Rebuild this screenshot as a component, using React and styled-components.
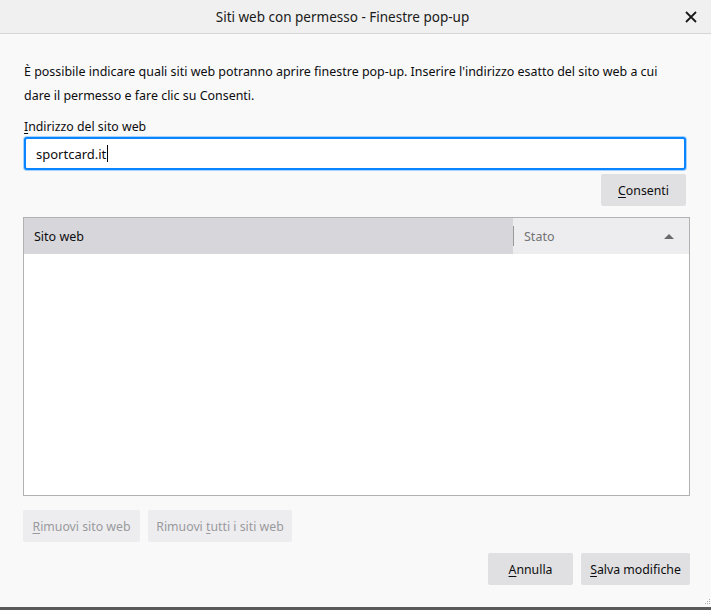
import React from "react";
import styled, { createGlobalStyle } from "styled-components";

const GlobalStyle = createGlobalStyle`
  html, body {
    margin: 0;
    padding: 0;
    background: #f9f9fa;
  }
  * {
    box-sizing: border-box;
  }
`;

const Window = styled.div`
  width: 711px;
  height: 610px;
  display: flex;
  flex-direction: column;
  background: #f9f9fa;
  font-family: "Noto Sans", "Open Sans", sans-serif;
  font-size: 12px;
  color: #0c0c0d;
  border-bottom: 3px solid #5a5a5a;
  position: relative;
`;

const TitleBar = styled.div`
  height: 34px;
  flex: none;
  display: flex;
  align-items: center;
  justify-content: center;
  background: #f0f0f0;
  border-bottom: 1px solid #d6d6d6;
  position: relative;
  padding-right: 26px;
`;

const Title = styled.div`
  font-size: 13.5px;
  color: #1a1a1a;
`;

const Close = styled.button`
  position: absolute;
  right: 12px;
  top: 9px;
  width: 16px;
  height: 16px;
  padding: 0;
  border: none;
  background: none;
  display: flex;
  align-items: center;
  justify-content: center;
`;

const Body = styled.div`
  flex: 1;
  display: flex;
  flex-direction: column;
  padding: 26px 21px 0 23px;
`;

const Intro = styled.p`
  margin: 0 0 0 1px;
  line-height: 24px;
  font-size: 12.45px;
  white-space: nowrap;
`;

const Label = styled.div`
  margin: 10px 0 0 1px;
  line-height: 18px;
  font-size: 12.3px;
`;

const Key = styled.span`
  text-decoration: underline;
  text-underline-offset: 2px;
`;

const Input = styled.div`
  margin: 1px 4px 0 1px;
  height: 33px;
  border: 2px solid #0a84ff;
  box-shadow: 0 0 0 1px #a6d2ff;
  border-radius: 3px;
  background: #fff;
  display: flex;
  align-items: center;
  padding: 0 10px;
  font-size: 13px;
`;

const Caret = styled.span`
  display: inline-block;
  width: 1px;
  height: 17px;
  background: #000;
  margin-left: 1px;
  vertical-align: middle;
`;

const Row = styled.div`
  display: flex;
  justify-content: ${(p) => p.$align || "flex-end"};
  gap: 8px;
  margin-top: ${(p) => p.$mt || 0}px;
  margin-right: ${(p) => p.$mr || 0}px;
`;

const Button = styled.button`
  height: 32px;
  padding: 0 8px;
  border: none;
  border-radius: 2px;
  background: ${(p) => (p.$disabled ? "#ededf0" : "#e0e0e2")};
  color: ${(p) => (p.$disabled ? "#9a9a9c" : "#0c0c0d")};
  font-family: inherit;
  font-size: 12.3px;
  min-width: ${(p) => p.$w || 0}px;
`;

const Table = styled.div`
  margin-top: 11px;
  height: 279px;
  border: 1px solid #b1b1b3;
  background: #fff;
  display: flex;
  flex-direction: column;
`;

const Header = styled.div`
  height: 36px;
  display: flex;
`;

const Col = styled.div`
  display: flex;
  align-items: center;
  padding: 0 10px;
  background: ${(p) => (p.$active ? "#d7d7db" : "#ededf0")};
  color: ${(p) => (p.$active ? "#0c0c0d" : "#737373")};
  flex: ${(p) => p.$flex || "none"};
  width: ${(p) => (p.$w ? p.$w + "px" : "auto")};
  justify-content: space-between;
  font-size: 12.5px;
`;

const Sep = styled.div`
  width: 1px;
  background: #ededf0;
  display: flex;
  align-items: center;
  &::after {
    content: "";
    display: block;
    width: 1px;
    height: 20px;
    background: #9a9a9c;
  }
`;

const Arrow = styled.span`
  width: 0;
  height: 0;
  border-left: 5px solid transparent;
  border-right: 5px solid transparent;
  border-bottom: 5px solid #6a6a6c;
  margin-right: 5px;
`;

const Grip = styled.svg`
  position: absolute;
  right: 0;
  bottom: 0;
`;

export default function App() {
  return (
    <>
      <GlobalStyle />
      <Window>
        <TitleBar>
          <Title>Siti web con permesso - Finestre pop-up</Title>
          <Close aria-label="Chiudi">
            <svg width="12" height="12" viewBox="0 0 12 12">
              <path d="M1 1 L11 11 M11 1 L1 11" stroke="#1a1a1a" strokeWidth="1.8" />
            </svg>
          </Close>
        </TitleBar>
        <Body>
          <Intro>
            È possibile indicare quali siti web potranno aprire finestre pop-up. Inserire l'indirizzo esatto del sito web a cui
            <br />
            dare il permesso e fare clic su Consenti.
          </Intro>
          <Label>
            <Key>I</Key>ndirizzo del sito web
          </Label>
          <Input>
            sportcard.it
            <Caret />
          </Input>
          <Row $mt={4} $mr={4}>
            <Button $w={85}>
              <Key>C</Key>onsenti
            </Button>
          </Row>
          <Table>
            <Header>
              <Col $active $flex="1">Sito web</Col>
              <Sep />
              <Col $w={175}>
                Stato
                <Arrow />
              </Col>
            </Header>
          </Table>
          <Row $align="flex-start" $mt={14}>
            <Button $disabled $w={117}>
              <Key>R</Key>imuovi sito web
            </Button>
            <Button $disabled $w={144}>
              Rimuovi <Key>t</Key>utti i siti web
            </Button>
          </Row>
          <Row $mt={11}>
            <Button $w={85}>
              <Key>A</Key>nnulla
            </Button>
            <Button $w={109}>
              <Key>S</Key>alva modifiche
            </Button>
          </Row>
        </Body>
        <Grip width="10" height="10" viewBox="0 0 10 10">
          <g fill="#b0b0b0">
            <rect x="8" y="2" width="1" height="1" />
            <rect x="6" y="4" width="1" height="1" />
            <rect x="8" y="4" width="1" height="1" />
            <rect x="4" y="6" width="1" height="1" />
            <rect x="6" y="6" width="1" height="1" />
            <rect x="8" y="6" width="1" height="1" />
          </g>
        </Grip>
      </Window>
    </>
  );
}
